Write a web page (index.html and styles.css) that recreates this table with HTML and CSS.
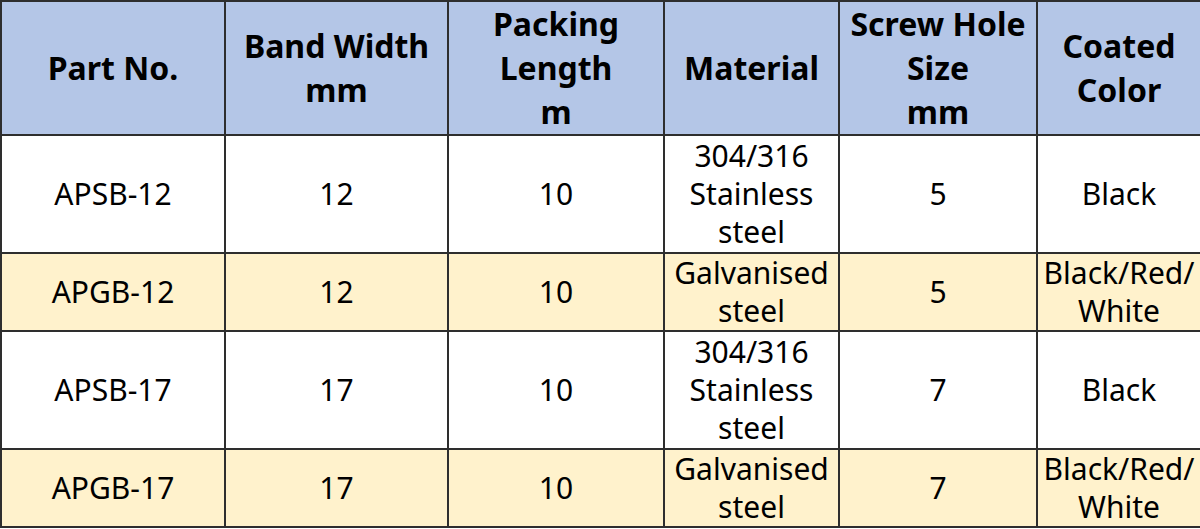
FILE: index.html
```html
<!DOCTYPE html>
<html>
<head>
<meta charset="utf-8">
<link rel="stylesheet" href="styles.css">
</head>
<body>
<table class="spec">
  <colgroup>
    <col class="c1"><col class="c2"><col class="c3"><col class="c4"><col class="c5"><col class="c6">
  </colgroup>
  <thead>
    <tr class="head">
      <th>Part No.</th>
      <th>Band Width<br>mm</th>
      <th>Packing<br>Length<br>m</th>
      <th>Material</th>
      <th>Screw Hole<br>Size<br>mm</th>
      <th>Coated<br>Color</th>
    </tr>
  </thead>
  <tbody>
    <tr class="tall">
      <td>APSB-12</td><td>12</td><td>10</td><td>304/316<br>Stainless<br>steel</td><td>5</td><td>Black</td>
    </tr>
    <tr class="short alt">
      <td>APGB-12</td><td>12</td><td>10</td><td>Galvanised<br>steel</td><td>5</td><td>Black/Red/<br>White</td>
    </tr>
    <tr class="tall">
      <td>APSB-17</td><td>17</td><td>10</td><td>304/316<br>Stainless<br>steel</td><td>7</td><td>Black</td>
    </tr>
    <tr class="short alt">
      <td>APGB-17</td><td>17</td><td>10</td><td>Galvanised<br>steel</td><td>7</td><td>Black/Red/<br>White</td>
    </tr>
  </tbody>
</table>
</body>
</html>
```

FILE: styles.css
```css
html, body {
  margin: 0;
  padding: 0;
  background: #ffffff;
}
.spec {
  width: 1200px;
  border-collapse: collapse;
  table-layout: fixed;
  font-family: "Noto Sans", "Open Sans", sans-serif;
  color: #000;
}
.c1 { width: 224px; }
.c2 { width: 223px; }
.c3 { width: 216px; }
.c4 { width: 175px; }
.c5 { width: 198px; }
.c6 { width: 164px; }
.spec th, .spec td {
  border: 2px solid #2e2e2e;
  text-align: center;
  vertical-align: middle;
  padding: 0;
}
.spec th {
  background: #b4c6e7;
  font-weight: bold;
  font-size: 32px;
  line-height: 44px;
  height: 132px;
}
.spec td {
  font-size: 30px;
  line-height: 38px;
}
.tall td { height: 116px; }
.short td { height: 75px; }
.alt td { background: #fff2cc; }
```
